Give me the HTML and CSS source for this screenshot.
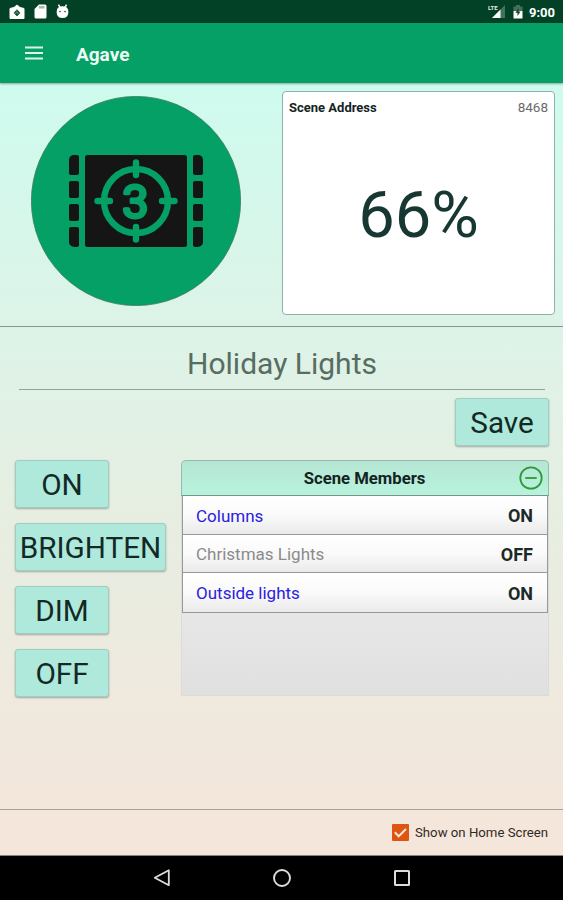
FILE: index.html
```html
<!DOCTYPE html>
<html lang="en">
<head>
    <meta charset="UTF-8">
    <title>Agave</title>
    <meta name="viewport" content="width=device-width, initial-scale=1.0">
    <link rel="stylesheet" href="styles.css">
</head>
<body>
    <div class="status-bar">
        <div class="status-group">
            <svg width="16" height="16" viewBox="0 0 16 16">
                <path d="M1 4.5 L5 3.5 L8 1 L11 3.5 L15 4.5 V14.5 H1 Z" fill="#fff" stroke="#fff" stroke-linejoin="round"/>
                <path d="M8 5.8 L10.8 8.8 L8 11.8 L5.2 8.8 Z" fill="#0a4527" stroke="#0a4527" stroke-linejoin="round"/>
                <path d="M8 5 V8.5 M5.5 9 H10.5" stroke="#9db8a9" stroke-width=".7"/>
            </svg>
            <svg class="sd-icon" width="13" height="15" viewBox="0 0 13 15">
                <path d="M5 .5 H11 Q12.5 .5 12.5 2 V13 Q12.5 14.5 11 14.5 H2 Q.5 14.5 .5 13 V5 Z" fill="#fff"/>
                <path d="M5 2 H10.5 V4.5 H5 Z" fill="#a9b9b0"/>
            </svg>
            <svg class="droid-icon" width="13" height="15" viewBox="0 0 13 15">
                <path d="M2.5 .7 L4 3.5 M10.5 .7 L9 3.5" stroke="#fff" stroke-width="1.5"/>
                <path d="M.7 7 Q1 2.2 6.5 2.2 Q12 2.2 12.3 7 V9 Q12 14 6.5 14 Q1 14 .7 9 Z" fill="#fff"/>
                <circle cx="4" cy="7.5" r=".8" fill="#0a4527"/>
                <circle cx="9" cy="7.5" r=".8" fill="#0a4527"/>
            </svg>
        </div>
        <div class="status-group">
            <svg width="18" height="15" viewBox="0 0 18 15">
                <path d="M17 1 V14 H4 Z" fill="#44735b"/>
                <path d="M12.5 5.5 V14 H4 Z" fill="#fff"/>
                <text class="network" x="0" y="6">LTE</text>
            </svg>
            <svg class="battery-icon" width="10" height="14" viewBox="0 0 10 14">
                <path d="M3 0 H7 V1.5 H9.5 V6 H.5 V1.5 H3 Z" fill="#456f59"/>
                <path d="M.5 6 H9.5 V13.5 H.5 Z" fill="#fff"/>
                <path d="M5.5 3 L2.5 7.8 H4.5 V11 L7.5 6.5 H5.5 Z" fill="#0a4527"/>
            </svg>
            <span class="clock">9:00</span>
        </div>
    </div>

    <header class="app-bar">
        <svg width="18" height="14" viewBox="0 0 18 14">
            <path d="M0 1.5 H18 M0 7 H18 M0 12.5 H18" stroke="#dff5ea" stroke-width="2"/>
        </svg>
        <h1>Agave</h1>
    </header>

    <main>
        <section class="summary">
            <div class="scene-icon">
                <svg width="210" height="210" viewBox="0 0 210 210">
                    <circle cx="105" cy="105" r="104.6" fill="#04a066" stroke="#3c7a60" stroke-width=".8"/>
                    <rect x="54" y="59" width="102" height="92" rx="2.5" fill="#151515"/>
                    <g fill="#151515">
                        <path d="M42 59 H46 Q48 59 48 61 V77 Q48 79 46 79 H40 Q38 79 38 77 V64 Q38 60 42 59 Z"/>
                        <rect x="38" y="85" width="10" height="17" rx="2"/>
                        <rect x="38" y="108" width="10" height="17" rx="2"/>
                        <path d="M40 131 H46 Q48 131 48 133 V149 Q48 151 46 151 H43 Q38 150 38 146 V133 Q38 131 40 131 Z"/>
                        <path d="M164 59 H168 Q172 60 172 64 V77 Q172 79 170 79 H164 Q162 79 162 77 V61 Q162 59 164 59 Z"/>
                        <rect x="162" y="85" width="10" height="17" rx="2"/>
                        <rect x="162" y="108" width="10" height="17" rx="2"/>
                        <path d="M164 131 H170 Q172 131 172 133 V146 Q172 150 167 151 H164 Q162 151 162 149 V133 Q162 131 164 131 Z"/>
                    </g>
                    <g fill="none" stroke="#04a066" stroke-width="6.4" stroke-linecap="round">
                        <circle cx="105" cy="105" r="32"/>
                        <path d="M105 66.5 V79 M105 131 V143.5 M66.5 105 H79 M131 105 H143.5"/>
                    </g>
                    <text class="scene-number" x="104.5" y="121.5" text-anchor="middle">3</text>
                </svg>
            </div>
            <div class="level-card">
                <div class="address">
                    <b>Scene Address</b>
                    <span>8468</span>
                </div>
                <div class="level">66%</div>
            </div>
        </section>

        <section class="detail">
            <div class="scene-name">Holiday Lights</div>
            <div class="save-row">
                <button class="btn">Save</button>
            </div>
            <div class="controls">
                <div class="actions">
                    <button class="btn">ON</button>
                    <button class="btn btn-wide">BRIGHTEN</button>
                    <button class="btn">DIM</button>
                    <button class="btn">OFF</button>
                </div>
                <div class="members">
                    <div class="members-header">
                        <span>Scene Members</span>
                        <svg width="24" height="24" viewBox="0 0 24 24">
                            <circle cx="12" cy="12" r="10.7" fill="none" stroke="#2c9a35" stroke-width="1.8"/>
                            <path d="M6.3 12 H17.7" stroke="#2c9a35" stroke-width="1.8"/>
                        </svg>
                    </div>
                    <ul>
                        <li><span class="linked">Columns</span><b>ON</b></li>
                        <li><span>Christmas Lights</span><b>OFF</b></li>
                        <li><span class="linked">Outside lights</span><b>ON</b></li>
                    </ul>
                </div>
            </div>
        </section>

        <footer class="home-option">
            <svg width="17" height="17" viewBox="0 0 17 17">
                <rect width="17" height="17" rx="1" fill="#dd5510"/>
                <path d="M2.8 8.3 L6.7 12.3 L14 5" fill="none" stroke="#f8e6da" stroke-width="2"/>
            </svg>
            <span>Show on Home Screen</span>
        </footer>
    </main>

    <nav class="nav-bar">
        <svg width="18" height="18" viewBox="0 0 18 18">
            <path d="M15.8 1.3 V16.2 L1.8 8.8 Z" fill="none" stroke="#ddd" stroke-width="1.8" stroke-linejoin="round"/>
        </svg>
        <svg width="18" height="18" viewBox="0 0 18 18">
            <circle cx="9" cy="9" r="8" fill="none" stroke="#ddd" stroke-width="1.9"/>
        </svg>
        <svg width="18" height="18" viewBox="0 0 18 18">
            <rect x="2" y="2" width="14" height="14" rx=".5" fill="none" stroke="#ddd" stroke-width="2"/>
        </svg>
    </nav>
</body>
</html>
```
FILE: styles.css
```css
* {
    box-sizing: border-box;
}

body {
    margin: 0;
    height: 900px;
    display: flex;
    flex-direction: column;
    font-family: Roboto, "Liberation Sans", sans-serif;
    color: #14231f;
    overflow: hidden;
}

svg {
    display: block;
    flex: none;
}

.status-bar {
    height: 23px;
    padding: 0 8px 0 9px;
    background: #024126;
    display: flex;
    justify-content: space-between;
    align-items: center;
}

.status-group {
    display: flex;
    align-items: center;
}

.sd-icon {
    margin-left: 9px;
}

.droid-icon {
    margin-left: 9px;
}

.network {
    font-size: 6px;
    font-weight: 700;
    fill: #e2eae6;
}

.battery-icon {
    margin-left: 7px;
}

.clock {
    margin-left: 6px;
    padding-top: 2px;
    font-size: 13px;
    font-weight: 700;
    line-height: 20px;
    color: #fff;
}

.app-bar {
    height: 60px;
    padding-left: 25px;
    background: #04a066;
    display: flex;
    align-items: center;
    gap: 33px;
    box-shadow: 0 1px 2px rgba(0,0,0,0.35);
    z-index: 1;
}

.app-bar h1 {
    margin: 2px 0 0;
    font-size: 19px;
    font-weight: 700;
    color: #eefaf4;
}

main {
    flex: 1;
    display: flex;
    flex-direction: column;
    background: linear-gradient(to bottom, #cefbee 0, #ddf3e8 240px, #e5efe2 410px, #efe9de 610px, #f5e5da 773px);
}

.summary {
    height: 244px;
    border-bottom: 1px solid #7f9890;
    padding: 8px 8px 0 31px;
    display: flex;
    justify-content: space-between;
}

.scene-icon {
    padding-top: 5px;
}

.scene-number {
    font-size: 47px;
    fill: #04a066;
    stroke: #04a066;
    stroke-width: 3px;
    stroke-linejoin: round;
}

.level-card {
    width: 273px;
    height: 224px;
    padding: 0 6px;
    background: #fff;
    border: 1px solid #8fb3aa;
    border-radius: 4px;
}

.address {
    height: 30px;
    display: flex;
    justify-content: space-between;
    align-items: center;
    font-size: 13px;
}

.address span {
    color: #6a6a6a;
    font-size: 13.5px;
}

.level {
    margin-top: 55px;
    font-size: 65px;
    line-height: 76px;
    text-align: center;
    color: #173733;
}

.detail {
    flex: 1;
    padding: 0 14px 0 15px;
}

.scene-name {
    height: 63px;
    margin: 0 4px;
    padding-top: 19px;
    border-bottom: 1px solid #92a59b;
    font-size: 30px;
    line-height: 36px;
    text-align: center;
    color: #576d62;
}

.save-row {
    display: flex;
    justify-content: flex-end;
    margin-top: 8px;
}

.btn {
    width: 94px;
    height: 48px;
    padding: 2px 0 0;
    border: 1px solid #a0cfc2;
    border-radius: 3px;
    background: #aee9dc;
    box-shadow: 0 1px 2px rgba(0,0,0,0.3);
    font-family: inherit;
    font-size: 29.7px;
    line-height: 36px;
    color: #132925;
}

.btn-wide {
    width: 151px;
}

.controls {
    margin-top: 14px;
    display: flex;
    justify-content: space-between;
}

.actions {
    display: flex;
    flex-direction: column;
    gap: 15px;
}

.members {
    width: 368px;
    height: 236px;
    background: linear-gradient(to bottom, #f4f4f4, #e0e0e0);
    border: 1px solid #dadcd6;
    border-top: 0;
    border-radius: 5px 5px 0 0;
}

.members-header {
    height: 36px;
    margin: 0 -1px;
    padding: 0 5px 0 28px;
    display: flex;
    align-items: center;
    border: 1px solid #94bcad;
    border-bottom-color: #779588;
    border-radius: 5px 5px 0 0;
    background: linear-gradient(to bottom, #b5e6d3, #b8f3dd);
    font-size: 16.7px;
    font-weight: 700;
}

.members-header span {
    flex: 1;
    padding-top: 1px;
    text-align: center;
}

.members ul {
    margin: 0;
    padding: 0;
    list-style: none;
    border: 1px solid #999;
    border-top: 0;
}

.members li {
    height: 38.6px;
    padding: 2px 14px 0 13px;
    display: flex;
    justify-content: space-between;
    align-items: center;
    background: linear-gradient(to bottom, #fff, #fafafa 50%, #eaeaea);
    border-bottom: 1px solid #999;
    font-size: 17px;
    color: #8b8b8b;
}

.members li:last-child {
    border-bottom: 0;
}

.members li b {
    font-size: 18px;
    color: #1c2927;
}

.members .linked {
    color: #2a20e0;
}

.home-option {
    height: 47px;
    padding: 0 15px 0 0;
    border-top: 1px solid #ab9f97;
    border-bottom: 1px solid #8b8079;
    background: #f5e6db;
    display: flex;
    justify-content: flex-end;
    align-items: center;
    gap: 6px;
    font-size: 13.2px;
    color: #302a26;
}

.nav-bar {
    height: 44px;
    background: #000;
    display: flex;
    justify-content: center;
    align-items: center;
    gap: 102px;
}
```
